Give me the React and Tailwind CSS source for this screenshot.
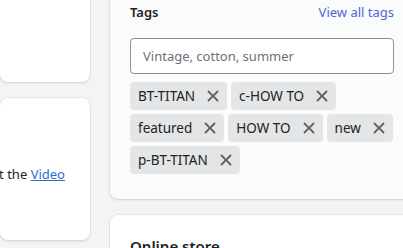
import React from 'react';

const tags = ['BT-TITAN', 'c-HOW TO', 'featured', 'HOW TO', 'new', 'p-BT-TITAN'];

const CloseIcon = () => (
    <svg viewBox="0 0 20 20" className="w-[18px] h-[18px] fill-[#5c5f62]">
        <path d="M11.414 10l4.293-4.293a.999.999 0 1 0-1.414-1.414L10 8.586 5.707 4.293a.999.999 0 1 0-1.414 1.414L8.586 10l-4.293 4.293a.999.999 0 1 0 1.414 1.414L10 11.414l4.293 4.293a.997.997 0 0 0 1.414 0 .999.999 0 0 0 0-1.414L11.414 10z" />
    </svg>
);

const Tag = ({ label }) => (
    <div className="flex items-center h-7 rounded bg-[#e4e5e7] text-[#202223] text-[13.5px]">
        <span className="pl-2">{label}</span>
        <button className="ml-1 w-7 h-7 flex items-center justify-center">
            <CloseIcon />
        </button>
    </div>
);

const App = () => {
    return (
        <div className="w-[403px] h-[248px] overflow-hidden bg-[#f4f4f4] font-['Noto_Sans',sans-serif] text-[13px] leading-5 text-[#202223]">
            <div className="flex gap-5 -mt-[18px]">
                {/* left column, mostly off screen */}
                <div className="w-[90px] shrink-0 flex flex-col gap-4">
                    <div className="h-[100px] bg-white rounded-lg shadow-[0_0_0_1px_rgba(63,63,68,0.05),0_1px_3px_rgba(63,63,68,0.15)]" />
                    <div className="h-[142px] bg-white rounded-lg shadow-[0_0_0_1px_rgba(63,63,68,0.05),0_1px_3px_rgba(63,63,68,0.15)] overflow-hidden pr-[25px] pt-[66px]">
                        <div className="flex justify-end whitespace-nowrap">
                            <span>
                                To learn more, check out the{' '}
                                <a href="#" className="text-[#2c6ecb] underline">Video</a>
                            </span>
                        </div>
                    </div>
                </div>

                {/* right column */}
                <div className="w-[304px] shrink-0 flex flex-col gap-4">
                    <div className="bg-[#fafbfb] rounded-lg shadow-[0_0_0_1px_rgba(63,63,68,0.05),0_1px_3px_rgba(63,63,68,0.15)] pt-5 pb-[25px] pl-5 pr-5">
                        <div className="flex justify-between items-center">
                            <h2 className="font-semibold">Tags</h2>
                            <a href="#" className="text-[#4f64d8]">View all tags</a>
                        </div>
                        <input
                            className="mt-4 w-full h-9 px-3 bg-white border border-[#8c9196] rounded placeholder:text-[#6d7175]"
                            placeholder="Vintage, cotton, summer"
                        />
                        <div className="mt-2 flex flex-wrap gap-1">
                            {tags.map((t) => (
                                <Tag key={t} label={t} />
                            ))}
                        </div>
                    </div>
                    <div className="h-[80px] bg-white rounded-lg shadow-[0_0_0_1px_rgba(63,63,68,0.05),0_1px_3px_rgba(63,63,68,0.15)] pt-[19px] px-5">
                        <h2 className="font-semibold text-[15px] leading-6">Online store</h2>
                    </div>
                </div>
            </div>
        </div>
    );
};

export default App;
